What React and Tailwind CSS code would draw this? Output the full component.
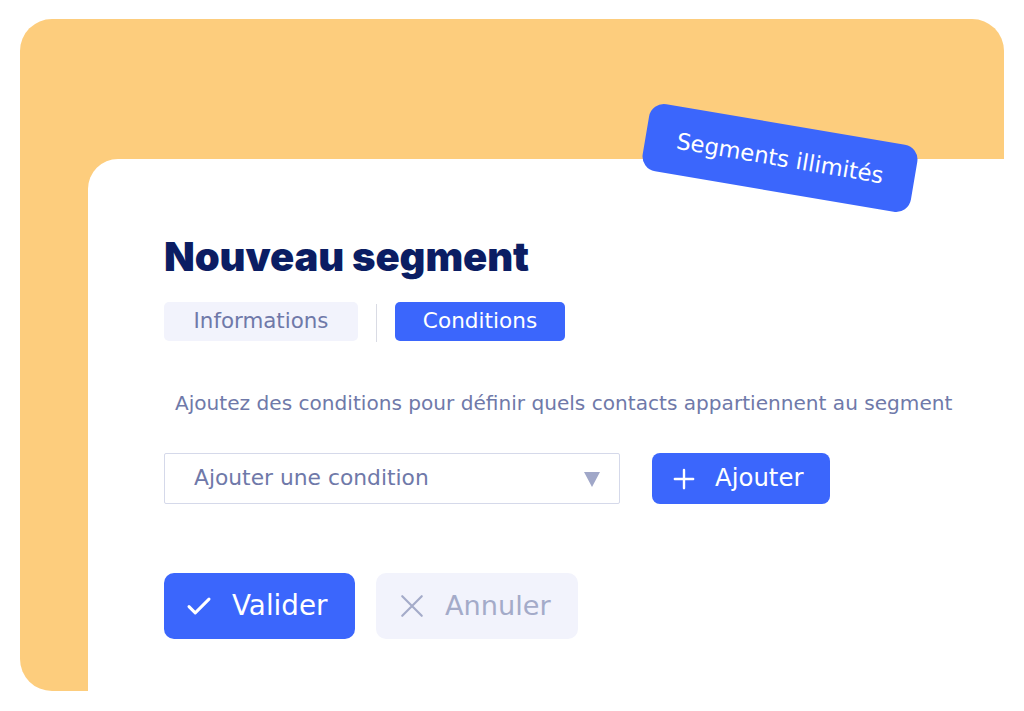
import React from "react";

const Check = () => (
  <svg className="w-[30px] h-[30px]" viewBox="0 0 24 24" fill="none" stroke="currentColor" strokeWidth={2.4} strokeLinecap="round" strokeLinejoin="round">
    <path d="M4 12.5l5 5L20 6.5" />
  </svg>
);

const Cross = () => (
  <svg className="w-[26px] h-[26px]" viewBox="0 0 24 24" fill="none" stroke="currentColor" strokeWidth={2} strokeLinecap="round">
    <path d="M3 3l18 18M21 3L3 21" />
  </svg>
);

const Plus = () => (
  <svg className="w-[22px] h-[22px]" viewBox="0 0 24 24" fill="none" stroke="currentColor" strokeWidth={2.6} strokeLinecap="round">
    <path d="M12 2v20M2 12h20" />
  </svg>
);

export default function App() {
  return (
    <div className="w-[1024px] h-[711px] bg-white overflow-hidden pt-[19px] pl-[20px] font-['DejaVu_Sans',sans-serif]">
      {/* Yellow frame */}
      <div className="relative w-[984px] h-[672px] bg-[#fdcd7d] rounded-[32px] pt-[140px] pl-[68px]">
        {/* White card */}
        <div className="w-[936px] h-[560px] bg-white rounded-tl-[30px] pl-[76px] pt-[74px]">
          <h1 className="text-[40px] leading-[48px] font-black tracking-[-0.1px] text-[#0b1d63] font-['Inter',sans-serif]">
            Nouveau segment
          </h1>

          {/* Tabs */}
          <div className="flex items-center mt-[19px]">
            <div className="w-[194px] h-[39px] rounded-[5px] bg-[#f2f3fc] flex items-center justify-center text-[21.4px] text-[#6f79a9]">
              Informations
            </div>
            <div className="w-px h-[38px] bg-[#d9dbe4] mx-[18px] mt-[4px]" />
            <div className="w-[170px] h-[39px] rounded-[5px] bg-[#3b66fc] flex items-center justify-center text-[21.6px] text-white">
              Conditions
            </div>
          </div>

          <p className="mt-[49px] ml-[11px] text-[20.1px] leading-[24px] text-[#6f79a9]">
            Ajoutez des conditions pour définir quels contacts appartiennent au segment
          </p>

          {/* Condition row */}
          <div className="flex items-center mt-[38px]">
            <div className="w-[456px] h-[51px] border border-[#d5d9ea] rounded-[2px] flex items-center justify-between pl-[29px] pr-[19px] text-[21.8px] text-[#6f79a9]">
              <span>Ajouter une condition</span>
              <svg className="w-[16px] h-[16px]" viewBox="0 0 16 16">
                <path d="M0 1h16L8 16z" fill="#a0a7c8" />
              </svg>
            </div>
            <button className="ml-[32px] w-[178px] h-[51px] rounded-[8px] bg-[#3b66fc] text-white flex items-center pl-[21px] gap-[20px] text-[24.4px]">
              <Plus />
              <span>Ajouter</span>
            </button>
          </div>

          {/* Actions */}
          <div className="flex items-center mt-[69px] gap-[21px]">
            <button className="w-[191px] h-[66px] rounded-[10px] bg-[#3b66fc] text-white flex items-center pl-[20px] gap-[18px] text-[27.8px]">
              <Check />
              <span>Valider</span>
            </button>
            <button className="w-[202px] h-[66px] rounded-[10px] bg-[#f2f3fc] text-[#a4abc9] flex items-center pl-[23px] gap-[20px] text-[27.2px]">
              <Cross />
              <span>Annuler</span>
            </button>
          </div>
        </div>

        {/* Rotated badge */}
        <div className="absolute left-[624px] top-[105px] w-[272px] h-[68px] rounded-[15px] bg-[#3b66fc] text-white text-[22.7px] flex items-center justify-center rotate-[9.6deg]">
          Segments illimités
        </div>
      </div>
    </div>
  );
}
